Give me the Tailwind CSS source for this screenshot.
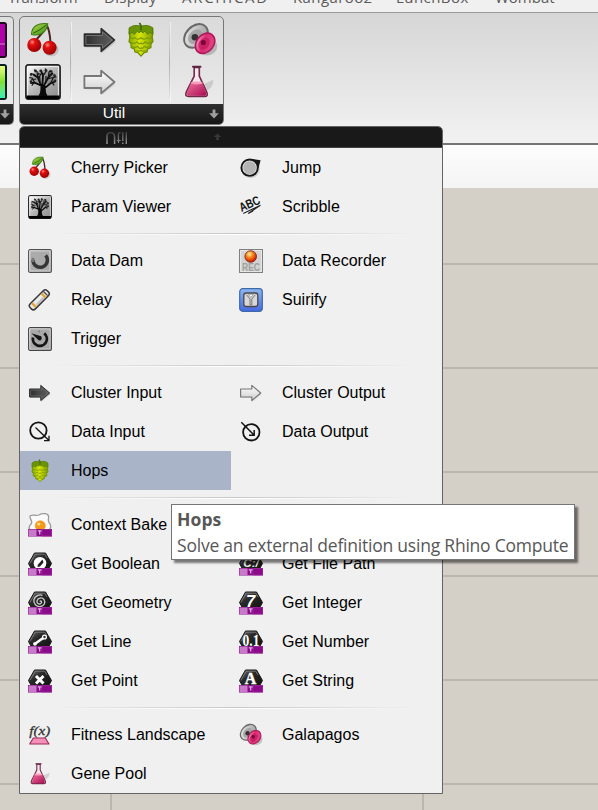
<!DOCTYPE html>
<html lang="en">
<head>
<meta charset="utf-8">
<title>Util</title>
<script src="https://cdn.jsdelivr.net/npm/@tailwindcss/browser@4"></script>
</head>
<body class="relative h-[810px] w-[598px] overflow-hidden bg-[#d4cfc7] font-['Liberation_Sans',Arial,sans-serif]">

<svg class="absolute h-0 w-0" aria-hidden="true">
  <defs>
    <linearGradient id="frame" x1="0" y1="0" x2="1" y2="1"><stop offset="0" stop-color="#fff"/><stop offset=".5" stop-color="#b4b4b4"/><stop offset="1" stop-color="#888"/></linearGradient>
    <linearGradient id="btn" x1="0" y1="0" x2="1" y2="1"><stop offset="0" stop-color="#eee"/><stop offset="1" stop-color="#999"/></linearGradient>
    <linearGradient id="dark" x1="0" y1="0" x2="1" y2="0"><stop offset="0" stop-color="#2c2c2c"/><stop offset=".5" stop-color="#4a4a4a"/><stop offset="1" stop-color="#5c5c5c"/></linearGradient>
    <linearGradient id="light" x1="0" y1="0" x2="0" y2="1"><stop offset="0" stop-color="#fff"/><stop offset="1" stop-color="#ccc"/></linearGradient>
    <radialGradient id="red" cx=".35" cy=".3" r=".7"><stop offset="0" stop-color="#ff8a80"/><stop offset=".3" stop-color="#e01010"/><stop offset="1" stop-color="#9c0000"/></radialGradient>
    <radialGradient id="rec" cx=".4" cy=".3" r=".7"><stop offset="0" stop-color="#fff3a0"/><stop offset=".4" stop-color="#f58a20"/><stop offset="1" stop-color="#c81000"/></radialGradient>
    <linearGradient id="pink" x1=".2" y1="0" x2=".7" y2="1"><stop offset="0" stop-color="#f9a4c6"/><stop offset=".45" stop-color="#d92c72"/><stop offset="1" stop-color="#e24a88"/></linearGradient>
    <linearGradient id="pinkv" x1="0" y1="0" x2="1" y2="1"><stop offset="0" stop-color="#f2709f"/><stop offset="1" stop-color="#a80d50"/></linearGradient>
    <linearGradient id="leaf" x1="0" y1="0" x2="1" y2="1"><stop offset="0" stop-color="#b4dc50"/><stop offset="1" stop-color="#368a10"/></linearGradient>
    <linearGradient id="blue" x1="0" y1="0" x2="0" y2="1"><stop offset="0" stop-color="#8fb8ee"/><stop offset="1" stop-color="#4668e0"/></linearGradient>
    <linearGradient id="hop" x1="0" y1="0" x2="1" y2="0"><stop offset="0" stop-color="#84a800"/><stop offset=".45" stop-color="#d6e60a"/><stop offset="1" stop-color="#7a9e00"/></linearGradient>
    <linearGradient id="hex" x1="0" y1="0" x2="1" y2="1"><stop offset="0" stop-color="#777"/><stop offset=".4" stop-color="#2a2a2a"/><stop offset="1" stop-color="#111"/></linearGradient>

    <symbol id="cherry" viewBox="0 0 24 24">
      <ellipse cx="17.500" cy="18.500" rx="5" ry="4.400" fill="#000" opacity=".14"/>
      <path d="M14.400 2.500C13 7 9.500 9 7 12.500M14.700 2.500C16.500 6 16.700 10 17 13.500" fill="none" stroke="#4c2424" stroke-width="1.300"/>
      <path d="M4.300 8.300C4.500 2.500 9 .5 15.200 1.200C14.500 6.500 10.500 9.800 4.300 8.300Z" fill="url(#leaf)" stroke="#3d7a16" stroke-width=".7"/>
      <path d="M5.500 7.500C9 6 12 4 14.500 1.800" fill="none" stroke="#2f6a10" stroke-width=".7"/>
      <circle cx="6.200" cy="15.300" r="4.700" fill="url(#red)"/><circle cx="16.400" cy="17.200" r="4.700" fill="url(#red)"/>
    </symbol>
    <symbol id="tree" viewBox="0 0 24 24">
      <rect x=".6" y=".6" width="22.800" height="22.800" rx="1.800" fill="url(#frame)" stroke="#222" stroke-width="1.100"/>
      <rect x="1.700" y="1.700" width="20.600" height="20" fill="none" stroke="#fff" stroke-width=".8" opacity=".7"/>
      <path d="M3 9C4 3 20 2 21 9C21.500 14 18 14 12 13C6 14 2.500 14 3 9Z" fill="#444" opacity=".3"/>
      <path d="M1 21H23V22.500Q23 23.400 22 23.400H2Q1 23.400 1 22.500Z" fill="#000"/>
      <path d="M9.500 21.300C11.200 19.500 11.100 17 10.900 14.500L6.500 12.500L3.500 12.800M11 15L8.500 9L5.500 7M11.500 15L12 8L10.500 4M12.300 15L15.500 9L18.500 6M12.600 16.500L17 12.800L20.500 11.500M14.500 21.300C12.900 19.500 13 17 13.300 14.500" fill="none" stroke="#0a0a0a" stroke-width="1.200"/>
      <path d="M10.800 14H13.200L14 21.300H10.200Z" fill="#0a0a0a"/>
      <path d="M6.500 12.500L5 9.500L2.800 9M8.500 9L8 5L6 3.800M12 8L14 5L13.500 3M15.500 9L16 5.500L17 4M17 12.800L19 9L21 8.500M6 12.500L4.500 14.500M18 12.300L19.500 14.200M9 9.500L11 6M15 10L18.500 9M7 7.500L3.800 6.200M4 10.500L7.500 10M10 12L9.800 8.500L7.500 8M14 12L14 8" fill="none" stroke="#151515" stroke-width=".8"/>
      <g fill="#222"><circle cx="4" cy="7" r=".8"/><circle cx="7" cy="4.600" r=".9"/><circle cx="10.500" cy="4.500" r=".9"/><circle cx="14" cy="4.300" r=".9"/><circle cx="17.500" cy="5" r=".9"/><circle cx="19.700" cy="7.800" r=".9"/><circle cx="4" cy="11.800" r=".9"/><circle cx="20" cy="11.200" r=".9"/><circle cx="9" cy="6.700" r=".8"/><circle cx="16.500" cy="7.200" r=".8"/><circle cx="12.800" cy="6.500" r=".7"/></g>
    </symbol>
    <symbol id="jump" viewBox="0 0 24 24">
      <circle cx="11.700" cy="13.200" r="9" fill="#000" opacity=".13"/>
      <path d="M12 2.800L21.600 4.200L19.500 12Z" fill="#161616"/>
      <circle cx="10.600" cy="11.700" r="8.200" fill="#ddd" stroke="#161616" stroke-width="1.900"/>
      <circle cx="10.600" cy="11.700" r="6.400" fill="#b4b4b4"/>
    </symbol>
    <symbol id="scribble" viewBox="0 0 24 24">
      <g transform="translate(2.500 17) rotate(-24)">
        <text x="0" y="0" font-family="Liberation Sans" font-size="12.500" font-weight="bold" fill="#111" textLength="21.500" lengthAdjust="spacingAndGlyphs">ABC</text>
        <path d="M1 2L20 1.600L5.500 4L11 3.700" fill="none" stroke="#222" stroke-width="1.100"/>
      </g>
    </symbol>
    <symbol id="dam" viewBox="0 0 24 24">
      <rect x=".6" y=".6" width="22.800" height="22.800" rx="1.500" fill="url(#btn)" stroke="#505050" stroke-width="1.100"/>
      <rect x="2" y="2" width="20" height="20" fill="#ababab" stroke="#ddd" stroke-width=".8"/>
      <path d="M17.600 6.300A7.200 7.200 0 1 1 5 11" fill="none" stroke="#363636" stroke-width="3.500"/><path d="M5 13A7.200 7.200 0 0 1 5.300 9" stroke="#777" fill="none" stroke-width="3"/>
    </symbol>
    <symbol id="record" viewBox="0 0 24 24">
      <rect x=".5" y=".5" width="23" height="23" fill="#d2d2d2" stroke="#808080"/>
      <rect x="1.700" y="1.700" width="20.600" height="20.600" fill="none" stroke="#eee" stroke-width=".8"/>
      <text x="3" y="21.900" font-family="Liberation Sans" font-size="10" font-weight="bold" fill="#a0a0a0" textLength="18" lengthAdjust="spacingAndGlyphs">REC</text>
      <circle cx="11.700" cy="7.500" r="5.800" fill="url(#rec)" stroke="#7a1c10" stroke-width=".8"/>
    </symbol>
    <symbol id="relay" viewBox="0 0 24 24">
      <g transform="translate(11.300 11.800) rotate(-45)">
        <rect x="-11" y="-2" width="23" height="6.500" rx="3" fill="#000" opacity=".14"/>
        <rect x="-12" y="-3.600" width="24" height="7.200" rx="2.800" fill="#ececec" stroke="#383838" stroke-width="1.500"/>
        <path d="M-7.500 -2.900V2.900M6 -2.900V2.900" stroke="#e3a33c" stroke-width="2.400"/>
        <path d="M8.800 -2.900V2.900" stroke="#444" stroke-width="1.400"/>
        <path d="M-5.500 1.500H4.500" stroke="#bbb" stroke-width="1.600"/>
      </g>
    </symbol>
    <symbol id="suirify" viewBox="0 0 24 24">
      <rect x=".7" y=".7" width="22.600" height="22.600" rx="3" fill="url(#blue)" stroke="#3c68ac" stroke-width="1.200"/>
      <rect x="4.800" y="5" width="14" height="13.500" rx="2.500" fill="#d8d8d8" stroke="#484848" stroke-width="1.300"/>
      <path d="M7.500 6.800L11 11V16.800H12.800V11L16.300 6.800" fill="none" stroke="#777" stroke-width="1"/>
      <path d="M9.500 6.300H14.200L11.900 9.500Z" fill="#fff" stroke="#777" stroke-width=".6"/>
    </symbol>
    <symbol id="trigger" viewBox="0 0 24 24">
      <rect x=".6" y=".6" width="22.800" height="22.800" rx="1.500" fill="url(#btn)" stroke="#444" stroke-width="1.100"/>
      <rect x="2" y="2" width="20" height="20" fill="#a8a8a8" stroke="#d4d4d4" stroke-width=".7"/>
      <path d="M16.200 6.400A7 7 0 1 1 5 10.500" fill="none" stroke="#151515" stroke-width="2.800"/>
      <path d="M3.400 6.300L13.200 9.300Q14.700 12 12.300 13.500Q10.500 13.700 9.300 12Z" fill="#151515"/>
      <path d="M11 3.500V5.500" stroke="#666"/>
    </symbol>
    <symbol id="arrowDark" viewBox="0 0 24 24">
      <path d="M2.200 9.500H13.500V5.500L22.500 13.500L13.500 20.700V17H2.200Z" fill="#000" opacity=".12"/>
      <path d="M1.600 8H12.800V4.400L21.700 12L12.800 19.600V16H1.600Z" fill="url(#dark)" stroke="#2b2b2b" stroke-linejoin="round"/>
      <path d="M2.600 9H13.700V6.600L20 12L13.700 17.300V15H2.600Z" fill="none" stroke="#777" stroke-width=".6"/>
    </symbol>
    <symbol id="arrowLight" viewBox="0 0 24 24">
      <path d="M2.200 9.500H13.500V5.500L22.500 13.500L13.500 20.700V17H2.200Z" fill="#000" opacity=".08"/>
      <path d="M1.600 8H12.800V4.400L21.700 12L12.800 19.600V16H1.600Z" fill="url(#light)" stroke="#777" stroke-width="1.200" stroke-linejoin="round"/>
    </symbol>
    <symbol id="dataIn" viewBox="0 0 24 24">
      <circle cx="10.400" cy="10.500" r="8.200" fill="none" stroke="#141414" stroke-width="1.800"/>
      <path d="M7.500 7.500L21 20.500M21 15.800V20.700H16" fill="none" stroke="#141414" stroke-width="1.300"/>
    </symbol>
    <symbol id="dataOut" viewBox="0 0 24 24">
      <circle cx="12.300" cy="12.300" r="8.200" fill="none" stroke="#141414" stroke-width="1.800"/>
      <path d="M2.300 2.300L15 15M15.200 10V15.200H10" fill="none" stroke="#141414" stroke-width="1.500"/>
    </symbol>
    <symbol id="hops" viewBox="0 0 24 24">
      <path d="M4.300 4L8 2.800H16L19.700 4L19.900 7.500L19.500 10L20 13L18.700 14.500L18.600 17L16.500 18L16 20L14 20.500L12 22.700L10 20.500L8 20L7.500 18L5.400 17L5.300 14.500L4 13L4.500 10L4.100 7.500Z" fill="url(#hop)" stroke="#6f8c00" stroke-width=".8"/>
      <path d="M4.500 9.500Q5.500 12 8.200 10.500Q9.500 12.500 12 10.500Q14.500 12.500 15.800 10.500Q18.500 12 19.500 9.500M5.300 13.500Q7.500 15 9.200 13.200Q10.500 15.300 12 14Q13.500 15.300 14.800 13.200Q16.500 15 18.700 13.500M6.200 16.500Q8 17.500 9.800 16.200Q11 18.300 12 17.300Q13 18.300 14.200 16.200Q16 17.500 17.800 16.500M8.500 19.200Q10.500 19.800 12 18.800Q13.500 19.800 15.500 19.200" fill="none" stroke="#7c9800" stroke-width=".8"/>
      <path d="M12 3.200C9 1.600 6 2.300 4.200 4L4.100 8L6.300 7L7.500 8.300L9.500 6.200L10.800 7.300L12 6L13.200 7.300L14.500 6.200L16.500 8.300L17.700 7L19.900 8L19.800 4C18 2.300 15 1.600 12 3.200Z" fill="#6a9408" stroke="#4f7208" stroke-width=".5"/>
      <path d="M12 5.500V2.500L11 .6" fill="none" stroke="#476b08" stroke-width="1.200"/>
    </symbol>
    <symbol id="galapagos" viewBox="0 0 24 24">
      <ellipse cx="16.700" cy="16.300" rx="6.800" ry="6" fill="#000" opacity=".18"/>
      <ellipse cx="9.300" cy="9.300" rx="9" ry="6.600" transform="rotate(-45 9.300 9.300)" fill="url(#btn)" stroke="#686868" stroke-width="1.300"/>
      <ellipse cx="8.800" cy="9.800" rx="5.500" ry="4" transform="rotate(-45 8.800 9.800)" fill="#9a9a9a" opacity=".75"/>
      <circle cx="8.600" cy="10.200" r="2.200" fill="#333"/>
      <ellipse cx="15.400" cy="14.200" rx="7.400" ry="5.700" transform="rotate(-50 15.400 14.200)" fill="url(#pink)" stroke="#b0185a" stroke-width="1.100"/>
      <ellipse cx="14.700" cy="14.500" rx="4.500" ry="3.300" transform="rotate(-50 14.700 14.500)" fill="#c2185c" opacity=".7"/>
      <circle cx="14.200" cy="13.700" r="1.700" fill="#7c0434"/>
    </symbol>
    <symbol id="flask" viewBox="0 0 24 24">
      <path d="M14 14L21.500 10.500Q22 15 17 18Z" fill="#000" opacity=".12"/>
      <path d="M8.800 2.200V8L3.500 18.800Q2.400 21.600 5 21.600H15.800Q18.300 21.600 17.200 18.800L12.200 8V2.200Z" fill="#f6e6ee" stroke="#74284c" stroke-width="1.100"/>
      <path d="M6.700 12.500H14.200L16.700 19Q17.200 21.200 15.500 21.200H5.200Q3.500 21.200 4.100 19Z" fill="url(#pinkv)"/>
      <path d="M8 1.800H13" stroke="#5a2540" stroke-width="1.300" stroke-linecap="round"/>
      <ellipse cx="10.500" cy="12.600" rx="3.900" ry="1" fill="#ff9cba"/>
    </symbol>
    <symbol id="tag" viewBox="0 0 24 24">
      <rect x="0" y="16" width="24" height="7.500" fill="#8a0a8a"/>
      <rect x=".5" y="16.500" width="8" height="6.500" fill="#c77ac7"/>
      <rect x="14" y="16.500" width="9.500" height="6.500" fill="none" stroke="#9a2c9a" stroke-width=".7"/>
      <path d="M9.800 17.800H13.600M11.700 18V21.500" stroke="#e0b4e0" stroke-width="1.200"/>
    </symbol>
    <symbol id="hexa" viewBox="0 0 24 24">
      <path d="M6.500 1H17.500L23.500 11.500L20.500 17H3.500L.5 11.500Z" fill="url(#hex)" stroke="#161616" stroke-linejoin="round"/>
      <path d="M2 11.200L7.200 2.200H16.800L19 6" fill="none" stroke="#8c8c8c" stroke-width=".7"/>
    </symbol>
    <symbol id="bake" viewBox="0 0 24 24">
      <path d="M2 3.500C2.500 .5 7 3.200 11 2C14 -.3 20 .5 20.500 3C21 6 19.500 7 21 9.500C23.500 12 23.500 17 19 18H4C0 16.500 .8 13 3 11C5.500 8.500 1.500 6 2 3.500Z" fill="#fafafa" stroke="#999" stroke-width="1.300"/>
      <circle cx="12.300" cy="12.800" r="5" fill="#f59a18" stroke="#e98300" stroke-width=".5"/><circle cx="10.800" cy="11" r="1.600" fill="#ffe08c"/>
      <use href="#tag" width="24" height="24"/>
    </symbol>
    <symbol id="gBool" viewBox="0 0 24 24"><use href="#hexa" width="24" height="24"/><circle cx="12" cy="11.300" r="6.300" fill="#fff"/><path d="M9.800 12.800L14.500 7.500L15.500 10.500L12 14.500L9.500 15Z" fill="#222"/><use href="#tag" width="24" height="24"/></symbol>
    <symbol id="gGeo" viewBox="0 0 24 24"><use href="#hexa" width="24" height="24"/><path d="M11.800 10.500C13 9 14.500 11 13 12.300C11 14 8.500 12 9 9.800C9.700 6.700 14 6 16 8.500C18 11.500 16 15 12.500 15.500C8.500 16 5 12.500 6 8.500C7 5 11 3 14.500 4.300" fill="none" stroke="#ccc" stroke-width="1.300"/><use href="#tag" width="24" height="24"/></symbol>
    <symbol id="gLine" viewBox="0 0 24 24"><use href="#hexa" width="24" height="24"/><path d="M7.800 13.300L15.500 7.700" stroke="#fff" stroke-width="2.600"/><circle cx="16.500" cy="7" r="1.900" fill="#333" stroke="#fff" stroke-width="1.300"/><circle cx="7" cy="13.800" r="1.900" fill="#fff"/><use href="#tag" width="24" height="24"/></symbol>
    <symbol id="gPoint" viewBox="0 0 24 24"><use href="#hexa" width="24" height="24"/><path d="M8 7L15.500 14.500M15.500 7L8 14.500" stroke="#fff" stroke-width="3"/><use href="#tag" width="24" height="24"/></symbol>
    <symbol id="gFile" viewBox="0 0 24 24"><use href="#hexa" width="24" height="24"/><text x="12" y="14.500" text-anchor="middle" font-family="Liberation Sans" font-weight="bold" font-style="italic" font-size="11.500" fill="#eee">C:/</text><use href="#tag" width="24" height="24"/></symbol>
    <symbol id="gInt" viewBox="0 0 24 24"><use href="#hexa" width="24" height="24"/><text x="11.500" y="16" text-anchor="middle" font-family="Liberation Sans" font-weight="bold" font-style="italic" font-size="16.500" fill="#fff">7</text><use href="#tag" width="24" height="24"/></symbol>
    <symbol id="gNum" viewBox="0 0 24 24"><use href="#hexa" width="24" height="24"/><text x="3.500" y="15.800" textLength="17" lengthAdjust="spacingAndGlyphs" font-family="Liberation Serif" font-weight="bold" font-size="16" fill="#fff">0.1</text><use href="#tag" width="24" height="24"/></symbol>
    <symbol id="gStr" viewBox="0 0 24 24"><use href="#hexa" width="24" height="24"/><text x="11.500" y="15.200" text-anchor="middle" font-family="Liberation Serif" font-weight="bold" font-size="16" fill="#fff" stroke="#fff" stroke-width=".4">A</text><use href="#tag" width="24" height="24"/></symbol>
    <symbol id="fitness" viewBox="0 0 24 24">
      <text x="1.200" y="11.500" font-family="Liberation Serif" font-style="italic" font-size="13.500" fill="#333" stroke="#333" stroke-width=".3" textLength="21" lengthAdjust="spacingAndGlyphs">f(x)</text>
      <path d="M5.300 15H17.300L21 21H1.700Z" fill="#f590b8" stroke="#9c2859" stroke-width="1.100" stroke-linejoin="round"/>
    </symbol>
    <symbol id="down" viewBox="0 0 12 12"><path d="M4.600 1.500H7.400V5.200H10.800L6 10.500L1.200 5.200H4.600Z" fill="#a0a0a0"/></symbol>
  </defs>
</svg>

<!-- Tab strip -->
<nav class="relative h-[13px] overflow-hidden border-b border-[#9a9a9a] bg-[#f0f0f0]">
  <div class="-mt-[14px] flex pl-[8px] font-['Open_Sans',sans-serif] text-[15px] leading-[22px] text-[#5a5a5a]">
    <span class="w-[96px] shrink-0 tracking-[-0.450px]">Transform</span><span class="w-[78px] shrink-0 tracking-[0.3px]">Display</span><span class="w-[111px] shrink-0 tracking-[1.700px]">ARCHICAD</span><span class="w-[103px] shrink-0 tracking-[0.400px]">Kangaroo2</span><span class="w-[99px] shrink-0 tracking-[0.450px]">LunchBox</span><span class="shrink-0">Wombat</span>
  </div>
</nav>

<!-- Ribbon -->
<header class="flex h-[132px] gap-[5px] border-b-2 border-[#757575] bg-linear-to-b from-[#d6d6d6] to-[#f2f2f2] pt-[3px]">
  <section class="relative flex h-[109px] w-[14px] flex-col overflow-hidden rounded-r-[5px] border border-l-0 border-[#777] bg-linear-to-b from-[#dedede] to-[#ececec]">
    <div class="mt-[5px] h-[36px] w-[7px] rounded-r-[3px] border-2 border-l-0 border-[#200820] bg-linear-to-b from-[#b000a8] from-60% via-[#e070d8] via-62% to-[#a0009c] to-66%"></div>
    <div class="mt-[6px] h-[36px] w-[7px] rounded-r-[3px] border-2 border-l-0 border-[#082020] bg-linear-to-b from-[#e8ff80] via-[#80e030] to-[#30f0b0]"></div>
    <div class="mt-auto flex h-[20px] items-center bg-linear-to-b from-[#303030] to-[#161616]"><svg class="-ml-px h-[12px] w-[12px] shrink-0"><use href="#down"/></svg></div>
  </section>
  <section class="flex h-[109px] w-[205px] flex-col overflow-hidden rounded-[5px] border border-[#777] bg-linear-to-b from-[#dadada] to-[#eeeeee]">
    <div class="flex h-[87px] pt-[5px] pl-[5px]">
      <div class="flex flex-col gap-[6px]"><svg class="size-[36px]"><use href="#cherry"/></svg><svg class="size-[36px]"><use href="#tree"/></svg></div>
      <div class="mr-[10px] ml-[9px] h-[80px] w-[2px] border-r border-white/60 bg-linear-to-b from-transparent via-[#b0b0b0] to-transparent"></div>
      <div class="grid grid-cols-[41px_36px] grid-rows-[36px_36px] gap-y-[6px]"><svg class="size-[36px]"><use href="#arrowDark"/></svg><svg class="size-[36px]"><use href="#hops"/></svg><svg class="size-[36px]"><use href="#arrowLight"/></svg></div>
      <div class="mr-[10px] ml-[10px] h-[80px] w-[2px] border-r border-white/60 bg-linear-to-b from-transparent via-[#b0b0b0] to-transparent"></div>
      <div class="flex flex-col gap-[6px]"><svg class="ml-px size-[36px]"><use href="#galapagos"/></svg><svg class="size-[36px]"><use href="#flask"/></svg></div>
    </div>
    <div class="flex h-[20px] items-center bg-linear-to-b from-[#303030] to-[#161616] text-[15.500px] leading-[18px] text-white">
      <span class="-mt-[2px] w-[188px] text-center">Util</span><svg class="size-[12px]"><use href="#down"/></svg>
    </div>
  </section>
</header>
<div class="h-[43px] bg-linear-to-b from-[#fdfdfd] to-[#f4f4f4]"></div>

<!-- Canvas grid -->
<main class="relative h-[622px]">
  <div class="h-full bg-[repeating-linear-gradient(to_bottom,transparent_0px,transparent_75px,#bbb6ae_75px,#bbb6ae_77px,transparent_77px,transparent_103.900px)]"></div>
</main>
<div class="absolute top-[188px] left-[110px] h-[622px] w-[2px] bg-[#bbb6ae]"></div>
<div class="absolute top-[188px] left-[422px] h-[622px] w-[2px] bg-[#bbb6ae]"></div>

<!-- Drop-down panel -->
<div class="absolute top-[126px] left-[19px] w-[424px] rounded-t-[5px] border border-[#646464] bg-[#f0f0f0]">
  <div class="flex h-[21px] overflow-hidden rounded-t-[4px] border-b border-[#444] bg-[#191919]">
    <div class="mt-px flex h-[18px] w-[208px] -scale-y-100 items-center text-[16px] leading-[18px] text-[#8c8c8c] [mask-image:linear-gradient(to_bottom,#000_20%,rgba(0,0,0,.3)_80%)]"><span class="w-[193px] text-center">Util</span><svg class="size-[9px] opacity-40"><use href="#down"/></svg></div>
  </div>
  <div id="menu" class="text-[16px] text-black"></div>
</div>

<!-- Tooltip -->
<div class="absolute top-[504px] left-[171px] h-[56px] w-[404px] border border-[#767676] bg-white pl-[5px] font-['Open_Sans',sans-serif] text-[17.500px] text-[#575757] shadow-[3px_3px_2px_rgba(0,0,0,.5)]">
  <div class="mt-[2px] h-[25px] font-bold leading-[25px]"><span class="tracking-[0.100px]">Hops</span></div>
  <div class="h-[26px] leading-[26px] whitespace-nowrap"><span class="tracking-[-0.220px]">Solve an external definition using Rhino Compute</span></div>
</div>

<script>
const groups = [
  [['cherry','Cherry Picker'],['jump','Jump'],['tree','Param Viewer'],['scribble','Scribble']],
  [['dam','Data Dam'],['record','Data Recorder'],['relay','Relay'],['suirify','Suirify'],['trigger','Trigger']],
  [['arrowDark','Cluster Input'],['arrowLight','Cluster Output'],['dataIn','Data Input'],['dataOut','Data Output'],['hops','Hops']],
  [['bake','Context Bake'],null,['gBool','Get Boolean'],['gFile','Get File Path'],['gGeo','Get Geometry'],['gInt','Get Integer'],['gLine','Get Line'],['gNum','Get Number'],['gPoint','Get Point'],['gStr','Get String']],
  [['fitness','Fitness Landscape'],['galapagos','Galapagos'],['flask','Gene Pool']]
];
const separator = '<div class="flex h-[15px] flex-col pt-[7px] pr-[24px] pl-[30px]"><div class="h-px bg-linear-to-r from-transparent via-[#c8c8c8] to-transparent"></div><div class="h-px bg-linear-to-r from-transparent via-white to-transparent"></div></div>';
const item = e => !e ? '<div></div>' :
  `<div class="flex h-[39px] items-start pl-[8px] ${e[1] === 'Hops' ? 'bg-[#a9b4c9]' : ''}"><svg class="mt-[8px] size-[24px] shrink-0"><use href="#${e[0]}"/></svg><span class="ml-[19px] leading-[39px] whitespace-nowrap">${e[1]}</span></div>`;
document.getElementById('menu').innerHTML = groups.map(g => `<div class="grid auto-rows-[39px] grid-cols-[211px_211px]">${g.map(item).join('')}</div>`).join(separator);
</script>
</body>
</html>
